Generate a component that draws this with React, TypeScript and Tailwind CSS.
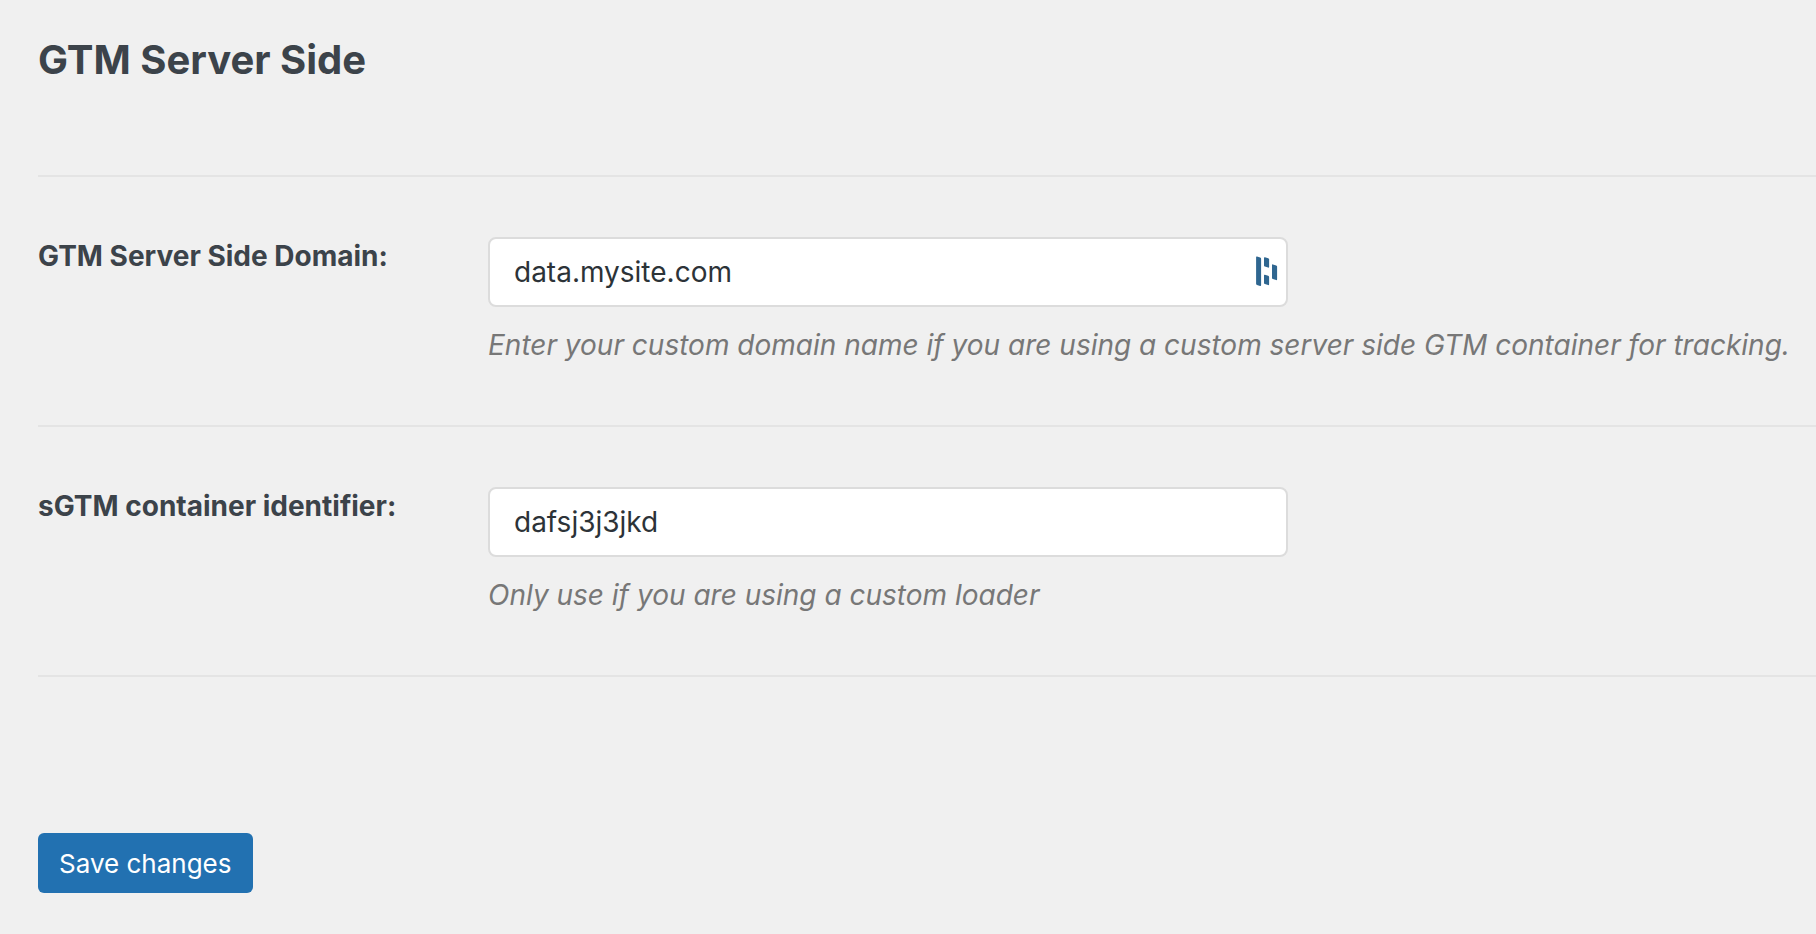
import React from "react";

type Field = {
  id: string;
  label: string;
  value: string;
  description: string;
  hasManager?: boolean;
};

const fields: Field[] = [
  {
    id: "sgtm-domain",
    label: "GTM Server Side Domain:",
    value: "data.mysite.com",
    description:
      "Enter your custom domain name if you are using a custom server side GTM container for tracking.",
    hasManager: true,
  },
  {
    id: "sgtm-identifier",
    label: "sGTM container identifier:",
    value: "dafsj3j3jkd",
    description: "Only use if you are using a custom loader",
  },
];

function ManagerIcon() {
  return (
    <svg
      viewBox="0 0 22 31"
      className="absolute right-[10px] top-[19px] h-[31px] w-[22px] fill-[#2f6690]"
      aria-hidden="true"
    >
      <path d="M0.1 1.2 Q0.1 0.3 1 0.6 L4.2 1.6 Q5.1 1.9 5.1 2.8 V29 Q5.1 30.2 4.1 29.9 L1 29 Q0.1 28.7 0.1 27.8Z" />
      <path d="M8 2 Q8 1.1 8.9 1.3 L12.2 2.3 Q13.1 2.6 13.1 3.5 V10.8 Q13.1 11.9 12.1 11.6 L8.9 10.6 Q8 10.3 8 9.4Z" />
      <path d="M8 19.3 Q8 18.4 8.9 18.7 L12.2 19.7 Q13.1 20 13.1 20.9 V28.3 Q13.1 29.4 12.1 29.1 L8.9 28.1 Q8 27.8 8 26.9Z" />
      <path d="M16 9 Q16 8.1 16.9 8.4 L20.2 9.4 Q21.1 9.7 21.1 10.6 V23.3 Q21.1 24.4 20.1 24.1 L16.9 23.1 Q16 22.8 16 21.9Z" />
    </svg>
  );
}

export default function App() {
  return (
    <div className="min-h-screen bg-[#f0f0f0] pl-[38px] pt-8 font-['Inter',sans-serif] text-[#3c434a]">
      <h1 className="text-[40px] font-bold leading-[56px]">GTM Server Side</h1>

      <form onSubmit={(e) => e.preventDefault()}>
        <div className="mt-[87px] border-t-2 border-[#e4e4e4]">
          {fields.map((field) => (
            <div
              key={field.id}
              className="flex items-start border-b-2 border-[#e4e4e4] pb-[60px] pt-[60px]"
            >
              <label
                htmlFor={field.id}
                className="w-[450px] shrink-0 text-[28px] font-bold leading-[38px]"
              >
                {field.label}
              </label>
              <div className="min-w-0 flex-1">
                <div className="relative max-w-[800px]">
                  <input
                    id={field.id}
                    type="text"
                    defaultValue={field.value}
                    aria-describedby={`${field.id}-help`}
                    className="block h-[70px] w-full rounded-lg border-2 border-[#dcdcdc] bg-white px-6 text-[28px] text-[#2c3338] outline-none"
                  />
                  {field.hasManager && <ManagerIcon />}
                </div>
                <p
                  id={`${field.id}-help`}
                  className="mt-[18px] text-[28px] italic leading-[40px] text-[#777777]"
                >
                  {field.description}
                </p>
              </div>
            </div>
          ))}
        </div>

        <button
          type="submit"
          className="mt-[156px] block h-[60px] cursor-pointer rounded-md bg-[#2271b1] px-[21px] text-[26px] text-white"
        >
          Save changes
        </button>
      </form>
    </div>
  );
}
